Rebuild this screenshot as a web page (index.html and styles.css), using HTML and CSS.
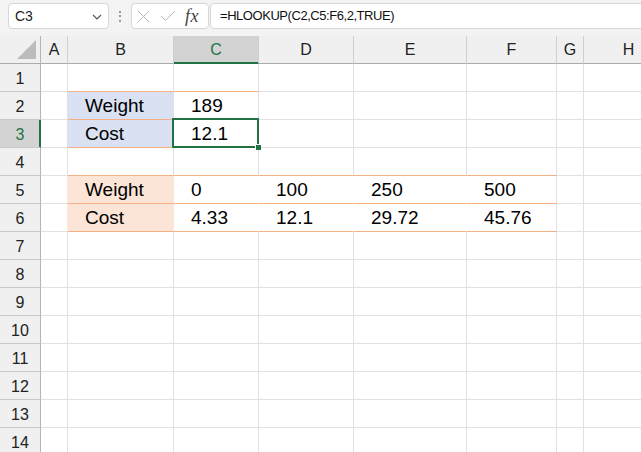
FILE: index.html
```html
<!DOCTYPE html>
<html>
<head>
<meta charset="utf-8">
<link rel="stylesheet" href="styles.css">
</head>
<body>
<div class="topbar">
  <div class="box namebox">
    <span class="name">C3</span>
    <svg class="chev" width="10" height="6" viewBox="0 0 10 6"><path d="M1 1 L5 5 L9 1" fill="none" stroke="#555" stroke-width="1.2"/></svg>
  </div>
  <div class="dots"><i></i><i></i><i></i></div>
  <div class="box fxbox">
    <svg class="ico" width="13" height="13" viewBox="0 0 13 13"><path d="M1 1 L12 12 M12 1 L1 12" fill="none" stroke="#b8b8b8" stroke-width="1"/></svg>
    <svg class="ico chk" width="16" height="12" viewBox="0 0 16 12"><path d="M1 6 L5.5 10.5 L15 1" fill="none" stroke="#b8b8b8" stroke-width="1"/></svg>
    <span class="fx">fx</span>
  </div>
  <div class="box formula">=HLOOKUP(C2,C5:F6,2,TRUE)</div>
</div>
<div class="sheet">
  <div class="c ch corner"><svg width="41" height="27" viewBox="0 0 41 27"><polygon points="17,23 36,23 36,4" fill="#bcbcbc"/></svg></div>
  <div class="c ch">A</div>
  <div class="c ch">B</div>
  <div class="c ch selcol">C</div>
  <div class="c ch">D</div>
  <div class="c ch">E</div>
  <div class="c ch">F</div>
  <div class="c ch">G</div>
  <div class="c ch">H</div>

  <div class="c rh">1</div><div class="c"></div><div class="c ob"></div><div class="c ob"></div><div class="c"></div><div class="c"></div><div class="c"></div><div class="c"></div><div class="c"></div>

  <div class="c rh">2</div><div class="c rblue"></div><div class="c ob blue">Weight</div><div class="c ob">189</div><div class="c"></div><div class="c"></div><div class="c"></div><div class="c"></div><div class="c"></div>

  <div class="c rh selrow">3</div><div class="c rblue"></div><div class="c ob blue">Cost</div><div class="c ob active">12.1</div><div class="c"></div><div class="c"></div><div class="c"></div><div class="c"></div><div class="c"></div>

  <div class="c rh">4</div><div class="c"></div><div class="c ob"></div><div class="c ob"></div><div class="c ob"></div><div class="c ob"></div><div class="c ob"></div><div class="c"></div><div class="c"></div>

  <div class="c rh">5</div><div class="c rpeach"></div><div class="c ob peach">Weight</div><div class="c ob nr">0</div><div class="c ob nr">100</div><div class="c ob nr">250</div><div class="c ob">500</div><div class="c"></div><div class="c"></div>

  <div class="c rh">6</div><div class="c rpeach"></div><div class="c ob peach">Cost</div><div class="c ob nr">4.33</div><div class="c ob nr">12.1</div><div class="c ob nr">29.72</div><div class="c ob">45.76</div><div class="c"></div><div class="c"></div>

  <div class="c rh">7</div><div class="c"></div><div class="c"></div><div class="c"></div><div class="c"></div><div class="c"></div><div class="c"></div><div class="c"></div><div class="c"></div>
  <div class="c rh">8</div><div class="c"></div><div class="c"></div><div class="c"></div><div class="c"></div><div class="c"></div><div class="c"></div><div class="c"></div><div class="c"></div>
  <div class="c rh">9</div><div class="c"></div><div class="c"></div><div class="c"></div><div class="c"></div><div class="c"></div><div class="c"></div><div class="c"></div><div class="c"></div>
  <div class="c rh">10</div><div class="c"></div><div class="c"></div><div class="c"></div><div class="c"></div><div class="c"></div><div class="c"></div><div class="c"></div><div class="c"></div>
  <div class="c rh">11</div><div class="c"></div><div class="c"></div><div class="c"></div><div class="c"></div><div class="c"></div><div class="c"></div><div class="c"></div><div class="c"></div>
  <div class="c rh">12</div><div class="c"></div><div class="c"></div><div class="c"></div><div class="c"></div><div class="c"></div><div class="c"></div><div class="c"></div><div class="c"></div>
  <div class="c rh">13</div><div class="c"></div><div class="c"></div><div class="c"></div><div class="c"></div><div class="c"></div><div class="c"></div><div class="c"></div><div class="c"></div>
  <div class="c rh">14</div><div class="c"></div><div class="c"></div><div class="c"></div><div class="c"></div><div class="c"></div><div class="c"></div><div class="c"></div><div class="c"></div>
</div>
</body>
</html>
```

FILE: styles.css
```css
html, body {
  margin: 0;
  padding: 0;
  background: #ffffff;
  overflow: hidden;
  width: 641px;
  height: 452px;
}

.topbar {
  display: flex;
  align-items: flex-start;
  box-sizing: border-box;
  height: 36px;
  padding: 3px 0 0 8px;
  background: #f3f3f3;
  font-family: "Liberation Sans", Arial, sans-serif;
}

.box {
  box-sizing: border-box;
  height: 26px;
  background: #ffffff;
  border: 1px solid #d6d6d6;
  border-radius: 4px;
}

.namebox {
  width: 101px;
  display: flex;
  align-items: center;
  justify-content: space-between;
  padding: 0 6px 0 6px;
}

.name {
  font-size: 14px;
  color: #222;
}

.chev {
  display: block;
  margin-top: 1px;
}

.dots {
  width: 22px;
  height: 26px;
  display: flex;
  flex-direction: column;
  align-items: center;
  justify-content: center;
  gap: 2.5px;
}

.dots i {
  display: block;
  width: 2px;
  height: 2px;
  background: #9a9a9a;
}

.fxbox {
  width: 78px;
  margin-right: 1px;
  display: flex;
  align-items: center;
  padding-left: 5px;
}

.ico {
  display: block;
}

.chk {
  margin-left: 10px;
}

.fx {
  margin-left: 9px;
  font-family: "Liberation Serif", "Times New Roman", serif;
  font-style: italic;
  font-size: 18px;
  letter-spacing: 0.5px;
  color: #444;
  line-height: 20px;
}

.formula {
  flex: 1;
  margin-right: -20px;
  padding-left: 9px;
  font-size: 13px;
  letter-spacing: -0.45px;
  line-height: 24px;
  color: #111;
  white-space: nowrap;
}

.sheet {
  display: grid;
  grid-template-columns: 41px 27px 106px 85px 95px 113px 90px 27px 90px;
  grid-auto-rows: 28px;
}

.c {
  box-sizing: border-box;
  border-right: 1px solid #e1e1e1;
  border-bottom: 1px solid #e1e1e1;
  font-family: "Liberation Sans", Arial, sans-serif;
  font-size: 19px;
  line-height: 27px;
  padding-left: 17px;
  color: #000;
  white-space: nowrap;
  overflow: hidden;
}

.ch {
  background: #f0f0f0;
  border-right-color: #cfcfcf;
  border-bottom-color: #acacac;
  padding: 1px 0 0 0;
  line-height: 26px;
  text-align: center;
  font-size: 16px;
  color: #222;
}

.corner {
  padding: 0;
  border-right-color: #b5b5b5;
}

.corner svg {
  display: block;
}

.rh {
  background: #f0f0f0;
  border-right-color: #b5b5b5;
  border-bottom-color: #c8c8c8;
  padding: 2px 0 0 0;
  line-height: 26px;
  text-align: center;
  font-size: 16px;
  color: #222;
}

.selcol {
  background: #d3d3d3;
  color: #217346;
  border-bottom-color: #217346;
  box-shadow: inset 0 -1px 0 #217346;
}

.selrow {
  background: #d3d3d3;
  color: #217346;
  border-right-color: #217346;
  box-shadow: inset -1px 0 0 #217346;
}

.ob {
  border-bottom-color: #f4b084;
}

.blue {
  background: #d9e1f2;
  border-right-color: #d9e1f2;
}

.rblue {
  border-right-color: #d9e1f2;
}

.peach {
  background: #fce4d6;
  border-right-color: #fce4d6;
}

.rpeach {
  border-right-color: #fce4d6;
}

.nr {
  border-right-color: #ffffff;
}

.active {
  position: relative;
  overflow: visible;
  z-index: 2;
}

.active::before {
  content: "";
  position: absolute;
  left: -2px;
  top: -2px;
  right: -1px;
  bottom: -1px;
  border: 2px solid #217346;
}

.active::after {
  content: "";
  position: absolute;
  right: -3px;
  bottom: -3px;
  width: 5px;
  height: 5px;
  background: #217346;
  border: 1px solid #ffffff;
  border-right: 0;
  border-bottom: 0;
}
```
